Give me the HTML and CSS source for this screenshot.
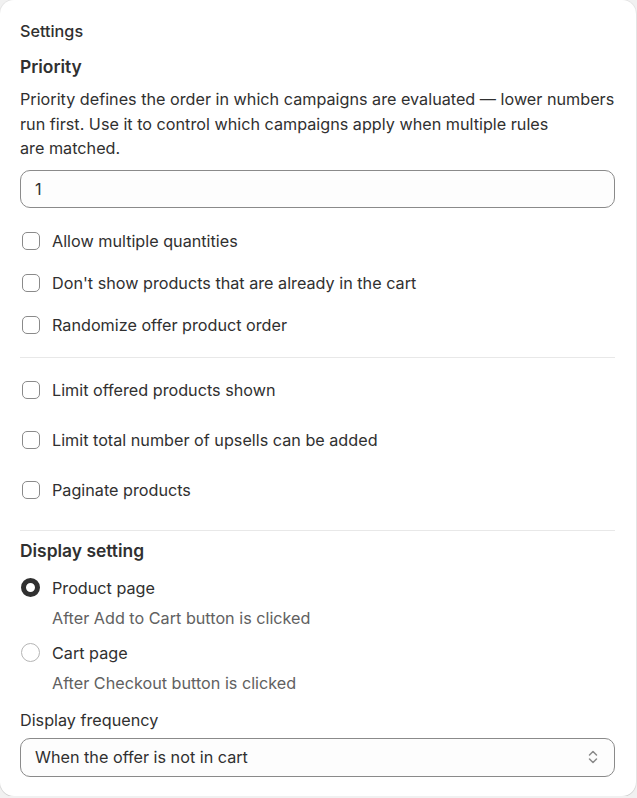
FILE: index.html
```html
<!DOCTYPE html>
<html lang="en">
<head>
    <meta charset="UTF-8">
    <meta name="viewport" content="width=device-width, initial-scale=1.0">
    <title>Settings</title>
    <link rel="stylesheet" href="styles.css">
</head>
<body>
    <div class="card">
        <div class="card-title">Settings</div>

        <!-- Priority -->
        <h3 class="heading">Priority</h3>
        <p class="help">Priority defines the order in which campaigns are evaluated — lower numbers run first. Use it to control which campaigns apply when multiple rules<br>are matched.</p>
        <div class="field">
            <input type="text" class="text-input" value="1">
        </div>

        <div class="check-list">
            <label class="check"><span class="box"></span>Allow multiple quantities</label>
            <label class="check"><span class="box"></span>Don't show products that are already in the cart</label>
            <label class="check"><span class="box"></span>Randomize offer product order</label>
        </div>

        <hr class="divider">

        <div class="check-list wide">
            <label class="check"><span class="box"></span>Limit offered products shown</label>
            <label class="check"><span class="box"></span>Limit total number of upsells can be added</label>
            <label class="check"><span class="box"></span>Paginate products</label>
        </div>

        <hr class="divider last">

        <!-- Display setting -->
        <h3 class="heading tight">Display setting</h3>
        <div class="radio-list">
            <div class="radio-item">
                <label class="radio"><span class="dot checked"></span>Product page</label>
                <div class="radio-help">After Add to Cart button is clicked</div>
            </div>
            <div class="radio-item">
                <label class="radio"><span class="dot"></span>Cart page</label>
                <div class="radio-help">After Checkout button is clicked</div>
            </div>
        </div>

        <div class="select-label">Display frequency</div>
        <div class="select">
            <span>When the offer is not in cart</span>
            <svg width="12" height="16" viewBox="0 0 12 16" fill="none" stroke="#8a8a8a" stroke-width="1.5" stroke-linecap="round" stroke-linejoin="round">
                <path d="M2.5 6 L6 2.5 L9.5 6"/>
                <path d="M2.5 10 L6 13.5 L9.5 10"/>
            </svg>
        </div>
    </div>
</body>
</html>
```

FILE: styles.css
```css
body {
    margin: 0;
    padding: 0;
    background: #f1f1f1;
    font-family: 'Inter', 'Liberation Sans', sans-serif;
    font-size: 16.2px;
    line-height: 24px;
    color: #303030;
}
.card {
    width: 636px;
    height: 796px;
    box-sizing: border-box;
    background: #fff;
    border-radius: 14px;
    box-shadow: 0 1px 0 rgba(0, 0, 0, 0.08), 0 0 0 1px rgba(0, 0, 0, 0.05);
    padding: 19px 21px 19px 20px;
}
.card-title {
    font-weight: 500;
}
.heading {
    margin: 12px 0 0;
    font-size: 17.4px;
    font-weight: 600;
    line-height: 24px;
}
.heading.tight {
    margin-top: 8px;
}
.help {
    margin: 8px 0 0;
    line-height: 24.5px;
}
.field {
    margin-top: 9px;
}
.text-input {
    width: 100%;
    height: 38px;
    box-sizing: border-box;
    border: 1px solid #8a8a8a;
    border-radius: 10px;
    padding: 0 14px;
    font-family: inherit;
    font-size: 16.2px;
    color: #303030;
    background: #fdfdfd;
}
.check-list {
    display: flex;
    flex-direction: column;
    gap: 18px;
    margin-top: 21px;
}
.check-list.wide {
    gap: 26px;
    margin-top: 20px;
}
.check {
    display: flex;
    align-items: center;
    gap: 12px;
    height: 24px;
}
.box {
    width: 18px;
    height: 18px;
    box-sizing: border-box;
    border: 1px solid #8a8a8a;
    border-radius: 5px;
    margin-left: 2px;
}
.divider {
    border: none;
    border-top: 1px solid #e8e8e8;
    margin: 20px 0 0;
}
.divider.last {
    margin-top: 28px;
}
.radio-list {
    margin-top: 13px;
    display: flex;
    flex-direction: column;
    gap: 11px;
}
.radio {
    display: flex;
    align-items: center;
    gap: 12px;
    height: 24px;
}
.radio-help {
    margin-top: 6px;
    padding-left: 32px;
    color: #616161;
}
.dot {
    width: 19px;
    height: 19px;
    box-sizing: border-box;
    border: 1px solid #b5b5b5;
    border-radius: 50%;
    margin-left: 1px;
}
.dot.checked {
    border: 5.5px solid #303030;
}
.select-label {
    margin-top: 13px;
}
.select {
    margin-top: 6px;
    height: 39px;
    box-sizing: border-box;
    border: 1px solid #8a8a8a;
    border-radius: 10px;
    background: #fdfdfd;
    padding: 0 15px 0 14px;
    display: flex;
    align-items: center;
    justify-content: space-between;
}
```
